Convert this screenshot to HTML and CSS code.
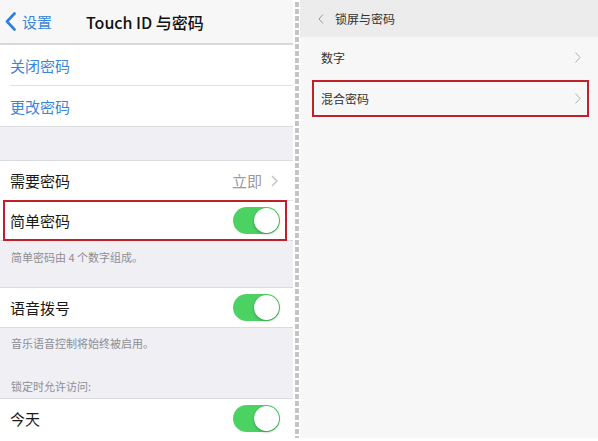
FILE: index.html
```html
<!DOCTYPE html>
<html>
<head>
    <meta charset="utf-8">
    <title>Touch ID 与密码</title>
    <link rel="stylesheet" href="styles.css">
</head>
<body>
    <div class="page">
        <!-- iOS settings screen -->
        <div class="ios">
            <div class="nav">
                <div class="back">
                    <svg width="11" height="19" viewBox="0 0 11 19"><path d="M9.5 1.5 L2 9.5 L9.5 17.5" fill="none" stroke="#2f7ed8" stroke-width="2.6" stroke-linecap="round" stroke-linejoin="round"/></svg>
                    <span>设置</span>
                </div>
                <div class="nav-title">Touch ID 与密码</div>
            </div>
            <div class="group group-top">
                <div class="row row-link">关闭密码</div>
                <div class="row row-link">更改密码</div>
            </div>
            <div class="gap"></div>
            <div class="group">
                <div class="row">
                    <span>需要密码</span>
                    <span class="detail">立即
                        <svg class="chev" width="7" height="12" viewBox="0 0 7 12"><path d="M1 1 L6 6 L1 11" fill="none" stroke="#c4c4c9" stroke-width="1.5"/></svg>
                    </span>
                </div>
                <div class="row marked">
                    <span>简单密码</span>
                    <span class="switch"></span>
                </div>
            </div>
            <div class="note note-first">简单密码由 4 个数字组成。</div>
            <div class="group">
                <div class="row">
                    <span>语音拨号</span>
                    <span class="switch"></span>
                </div>
            </div>
            <div class="note">音乐语音控制将始终被启用。</div>
            <div class="note note-head">锁定时允许访问:</div>
            <div class="group">
                <div class="row">
                    <span>今天</span>
                    <span class="switch"></span>
                </div>
            </div>
        </div>

        <div class="split"></div>

        <!-- Android lock screen settings -->
        <div class="droid">
            <div class="droid-head">
                <svg class="droid-back" width="6" height="10" viewBox="0 0 6 10"><path d="M5 0.5 L1 5 L5 9.5" fill="none" stroke="#9a9a9a" stroke-width="1"/></svg>
                <span>锁屏与密码</span>
            </div>
            <div class="droid-row">
                <span>数字</span>
                <svg width="6" height="11" viewBox="0 0 6 11"><path d="M0.5 0.5 L5 5.5 L0.5 10.5" fill="none" stroke="#b0b0b0" stroke-width="1"/></svg>
            </div>
            <div class="droid-row marked-r">
                <span>混合密码</span>
                <svg width="6" height="11" viewBox="0 0 6 11"><path d="M0.5 0.5 L5 5.5 L0.5 10.5" fill="none" stroke="#b0b0b0" stroke-width="1"/></svg>
            </div>
        </div>
    </div>
</body>
</html>
```

FILE: styles.css
```css
/* General */
body, html {
    margin: 0;
    padding: 0;
    background-color: #ffffff;
    font-family: 'Noto Sans CJK SC', 'Noto Sans', sans-serif;
}
.page {
    display: flex;
    width: 598px;
    height: 438px;
}
/* iOS panel */
.ios {
    width: 293px;
    background-color: #efeff4;
    display: flex;
    flex-direction: column;
    overflow: hidden;
}
.nav {
    height: 43px;
    background-color: #f7f7f8;
    border-bottom: 1px solid #d6d6da;
    box-shadow: 0 1px 2px rgba(0, 0, 0, 0.08);
    display: flex;
    align-items: center;
    padding-left: 5px;
    flex-shrink: 0;
}
.back {
    display: flex;
    align-items: center;
    gap: 6px;
    color: #3a86d8;
    font-size: 15px;
}
.nav-title {
    margin-left: 34px;
    font-size: 16px;
    font-weight: 500;
    color: #111111;
}
.group {
    background-color: #ffffff;
    border-top: 1px solid #dcdce0;
    border-bottom: 1px solid #dcdce0;
    flex-shrink: 0;
}
.row {
    height: 39px;
    margin-left: 10px;
    padding-right: 13px;
    display: flex;
    align-items: center;
    justify-content: space-between;
    font-size: 15px;
    color: #1a1a1a;
    border-bottom: 1px solid #e2e2e6;
    position: relative;
}
.group-top .row {
    height: 40px;
}
.row:last-child {
    border-bottom: none;
}
.row-link {
    color: #3a86d8;
}
.gap {
    height: 33px;
    flex-shrink: 0;
}
.detail {
    display: flex;
    align-items: center;
    color: #9a9a9f;
    font-size: 15px;
}
.chev {
    margin-left: 9px;
    margin-right: 2px;
}
.switch {
    width: 47px;
    height: 27px;
    border-radius: 14px;
    background-color: #4cd263;
    position: relative;
}
.switch::after {
    content: '';
    position: absolute;
    right: 1px;
    top: 1px;
    width: 25px;
    height: 25px;
    border-radius: 50%;
    background-color: #ffffff;
    box-shadow: 0 1px 3px rgba(0, 0, 0, 0.3);
}
.marked::before {
    content: '';
    position: absolute;
    left: -7px;
    right: 6px;
    top: -1px;
    bottom: -1px;
    border: 2px solid #c0202a;
}
.note {
    font-size: 11px;
    color: #8e8e93;
    padding: 7px 11px 0;
    height: 34px;
    box-sizing: border-box;
    flex-shrink: 0;
}
.note-first {
    height: 46px;
    padding-top: 8px;
}
.note-head {
    height: 36px;
    padding-top: 16px;
}
/* Divider */
.split {
    width: 7px;
    background: repeating-linear-gradient(#ffffff 0, #ffffff 2px, #c4c4c4 2px, #c4c4c4 7px);
    border-left: 2px solid #ffffff;
    border-right: 1px solid #ffffff;
    box-sizing: border-box;
}
/* Android panel */
.droid {
    flex: 1;
    background-color: #f7f7f7;
}
.droid-head {
    height: 37px;
    background-color: #ececec;
    display: flex;
    align-items: center;
    padding-left: 18px;
    font-size: 12px;
    color: #333333;
}
.droid-back {
    margin-right: 11px;
}
.droid-row {
    height: 41px;
    display: flex;
    align-items: center;
    justify-content: space-between;
    padding: 0 17px 0 21px;
    font-size: 12px;
    color: #333333;
    position: relative;
}
.marked-r::before {
    content: '';
    position: absolute;
    left: 12px;
    right: 9px;
    top: 2px;
    bottom: 2px;
    border: 2px solid #c0202a;
}
```
